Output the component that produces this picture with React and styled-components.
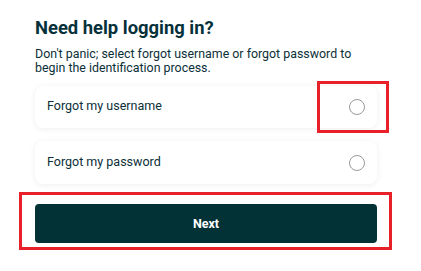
import React, { useState } from 'react';
import styled, { createGlobalStyle } from 'styled-components';

const GlobalStyle = createGlobalStyle`
  html, body {
    margin: 0;
    padding: 0;
    background: #ffffff;
  }
  body {
    font-family: Roboto, "Liberation Sans", Arial, sans-serif;
    color: #0b3038;
  }
`;

const Page = styled.div`
  position: relative;
  width: 421px;
  height: 271px;
  padding: 17px 0 0 35px;
  box-sizing: border-box;
`;

const Panel = styled.div`
  width: 342px;
  display: flex;
  flex-direction: column;
`;

const Title = styled.h1`
  margin: 0;
  font-size: 18.4px;
  line-height: 22px;
  font-weight: 700;
  color: #06313a;
`;

const Intro = styled.p`
  margin: 8px 0 0;
  font-size: 12.4px;
  line-height: 14px;
  color: #0b3038;
`;

const Options = styled.div`
  margin-top: 11px;
  display: flex;
  flex-direction: column;
  gap: 13px;
`;

const OptionCard = styled.label`
  height: ${(p) => p.$h}px;
  box-sizing: border-box;
  display: flex;
  align-items: center;
  justify-content: space-between;
  padding: 0 12px 3px;
  background: #ffffff;
  border-radius: 8px;
  box-shadow: 0 1px 6px rgba(0, 0, 0, 0.07);
  font-size: 12.5px;
  color: #0b3038;
  cursor: pointer;
`;

const Radio = styled.span`
  width: 14px;
  height: 14px;
  border-radius: 50%;
  border: 1.5px solid ${(p) => (p.$checked ? '#06313a' : '#9a9a9a')};
  background: ${(p) => (p.$checked ? 'radial-gradient(circle, #06313a 45%, #fff 50%)' : '#fff')};
  margin-top: 3px;
`;

const NextButton = styled.button`
  margin-top: 20px;
  height: 39px;
  border: none;
  border-radius: 4px;
  background: #023236;
  color: #ffffff;
  font-family: inherit;
  font-size: 12.5px;
  font-weight: 700;
  cursor: pointer;
`;

const Highlight = styled.div`
  position: absolute;
  border: 3px solid #e8202a;
  box-sizing: border-box;
  pointer-events: none;
`;

const options = [
  { id: 'username', label: 'Forgot my username', h: 42 },
  { id: 'password', label: 'Forgot my password', h: 43 },
];

export default function App() {
  const [choice, setChoice] = useState(null);

  return (
    <>
      <GlobalStyle />
      <Page>
        <Panel>
          <Title>Need help logging in?</Title>
          <Intro>
            Don't panic; select forgot username or forgot password to
            <br />
            begin the identification process.
          </Intro>
          <Options>
            {options.map((o) => (
              <OptionCard key={o.id} $h={o.h} onClick={() => setChoice(o.id)}>
                {o.label}
                <Radio $checked={choice === o.id} />
              </OptionCard>
            ))}
          </Options>
          <NextButton>Next</NextButton>
        </Panel>
        <Highlight style={{ left: 317, top: 81, width: 72, height: 52 }} />
        <Highlight style={{ left: 19, top: 192, width: 373, height: 58 }} />
      </Page>
    </>
  );
}
